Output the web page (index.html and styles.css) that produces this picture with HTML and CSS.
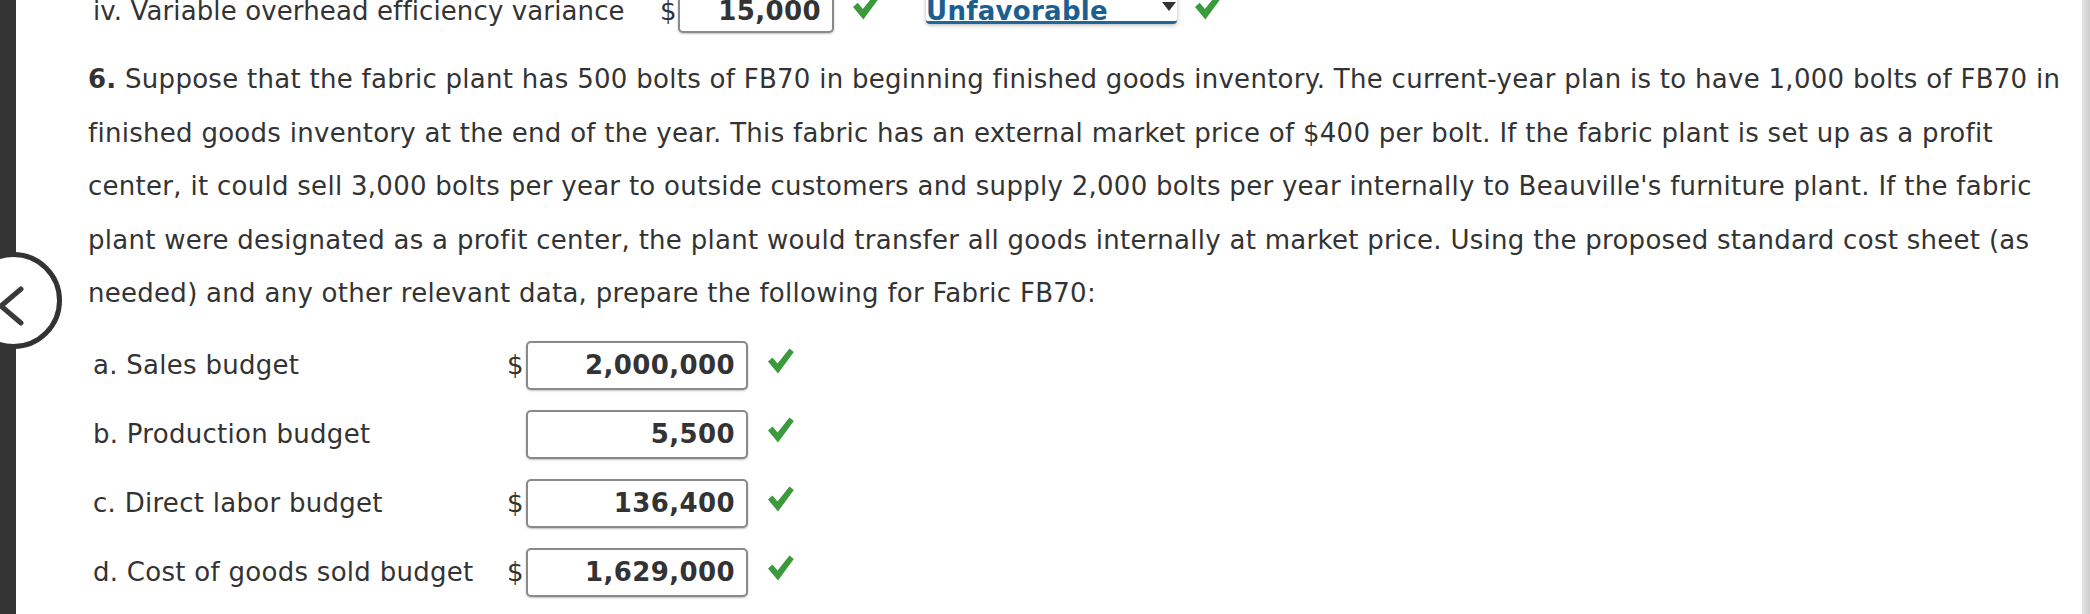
FILE: index.html
```html
<!DOCTYPE html>
<html lang="en">
<head>
<meta charset="utf-8">
<title>Fabric FB70 budgets</title>
<link rel="stylesheet" href="styles.css">
</head>
<body>
<div class="page">
  <div class="rail"></div>
  <div class="back">
    <svg class="chev" width="30" height="50" viewBox="0 0 30 50"><polyline points="21,6 1,23 21,40" fill="none" stroke="#3a3a3a" stroke-width="5" stroke-linecap="round" stroke-linejoin="round"/></svg>
  </div>
  <main class="content">
    <div class="toprow">
      <span class="lbl lbl-top">iv. Variable overhead efficiency variance</span>
      <span class="cur cur-top">$</span>
      <span class="box box-top">15,000</span>
      <svg class="check check-top" viewBox="0 0 26 26"><polygon points="0,13.5 4.5,9.5 9.5,15.5 21.5,0.5 25.8,4 10,25.5" fill="#3b9a3b"/></svg>
      <span class="select"><span class="sel-text">Unfavorable</span><svg class="arrow" viewBox="0 0 14 9"><polygon points="0,0 14,0 7,9" fill="#333"/></svg></span>
      <svg class="check check-sel" viewBox="0 0 26 26"><polygon points="0,13.5 4.5,9.5 9.5,15.5 21.5,0.5 25.8,4 10,25.5" fill="#3b9a3b"/></svg>
    </div>
    <p class="question"><b>6.</b> Suppose that the fabric plant has 500 bolts of FB70 in beginning finished goods inventory. The current-year plan is to have 1,000 bolts of FB70 in<br>finished goods inventory at the end of the year. This fabric has an external market price of $400 per bolt. If the fabric plant is set up as a profit<br>center, it could sell 3,000 bolts per year to outside customers and supply 2,000 bolts per year internally to Beauville's furniture plant. If the fabric<br>plant were designated as a profit center, the plant would transfer all goods internally at market price. Using the proposed standard cost sheet (as<br>needed) and any other relevant data, prepare the following for Fabric FB70:</p>
    <div class="rows">
      <span class="lbl">a. Sales budget</span>
      <span class="cur">$</span>
      <span class="box">2,000,000</span>
      <svg class="check" viewBox="0 0 26 26"><polygon points="0,13.5 4.5,9.5 9.5,15.5 21.5,0.5 25.8,4 10,25.5" fill="#3b9a3b"/></svg>

      <span class="lbl">b. Production budget</span>
      <span class="cur"></span>
      <span class="box">5,500</span>
      <svg class="check" viewBox="0 0 26 26"><polygon points="0,13.5 4.5,9.5 9.5,15.5 21.5,0.5 25.8,4 10,25.5" fill="#3b9a3b"/></svg>

      <span class="lbl">c. Direct labor budget</span>
      <span class="cur">$</span>
      <span class="box">136,400</span>
      <svg class="check" viewBox="0 0 26 26"><polygon points="0,13.5 4.5,9.5 9.5,15.5 21.5,0.5 25.8,4 10,25.5" fill="#3b9a3b"/></svg>

      <span class="lbl">d. Cost of goods sold budget</span>
      <span class="cur">$</span>
      <span class="box">1,629,000</span>
      <svg class="check" viewBox="0 0 26 26"><polygon points="0,13.5 4.5,9.5 9.5,15.5 21.5,0.5 25.8,4 10,25.5" fill="#3b9a3b"/></svg>
    </div>
  </main>
  <div class="scroll"></div>
</div>
</body>
</html>
```
FILE: styles.css
```css
html, body {
  margin: 0;
  padding: 0;
  background: #fff;
}
body {
  font-family: "DejaVu Sans", Verdana, sans-serif;
  font-size: 26px;
  letter-spacing: 0.28px;
  color: #333;
}
.page {
  position: relative;
  display: flex;
  width: 2090px;
  height: 614px;
  overflow: hidden;
}
.rail {
  width: 16px;
  flex: none;
  background: #333;
}
.back {
  position: absolute;
  left: -35px;
  top: 252px;
  width: 87px;
  height: 87px;
  border: 5px solid #333;
  border-radius: 50%;
  background: #fff;
}
.chev {
  position: absolute;
  left: 30px;
  top: 26px;
  filter: blur(0.6px);
}
.content {
  flex: 1;
  padding-left: 72px;
  min-width: 0;
}
.toprow {
  display: flex;
  align-items: baseline;
  height: 64px;
  margin-top: -11px;
  padding-left: 5px;
}
.lbl-top {
  width: 567px;
  flex: none;
  letter-spacing: 0.12px;
}
.cur {
  display: block;
}
.cur-top {
  width: 18px;
}
.box {
  box-sizing: border-box;
  display: block;
  height: 49px;
  line-height: 45px;
  border: 2px solid #8a8a8a;
  border-radius: 5px;
  box-shadow: 0 1px 2px rgba(0, 0, 0, 0.25);
  padding-right: 11px;
  text-align: right;
  font-weight: bold;
  letter-spacing: 0.4px;
  color: #333;
  background: #fff;
}
.box-top {
  width: 156px;
  height: 44px;
  line-height: 40px;
  flex: none;
}
.check {
  width: 26px;
  height: 26px;
  display: block;
  align-self: center;
}
.check-top {
  width: 27px;
  height: 27px;
  margin-left: 19px;
  align-self: baseline;
}
.select {
  display: flex;
  align-items: flex-end;
  justify-content: space-between;
  box-sizing: border-box;
  width: 251px;
  margin-left: 46px;
  line-height: 20px;
  padding-top: 10px;
  font-weight: bold;
  color: #1b5f92;
  border-bottom: 3px solid #1f6699;
  border-radius: 0 0 4px 4px;
  box-shadow: 0 1px 4px rgba(0, 0, 0, 0.3);
  background: #fff;
}
.arrow {
  width: 14px;
  height: 9px;
  margin-bottom: 10px;
  margin-right: 1px;
}
.check-sel {
  width: 27px;
  height: 27px;
  margin-left: 18px;
  align-self: baseline;
}
.question {
  margin: 0;
  line-height: 53.5px;
  white-space: nowrap;
}
.question b {
  font-weight: bold;
}
.rows {
  display: grid;
  grid-template-columns: 414px 19px 222px 26px;
  grid-auto-rows: 49px;
  row-gap: 20px;
  align-items: center;
  margin-top: 20px;
  padding-left: 5px;
}
.rows .check {
  margin-left: 20px;
  margin-top: -8px;
}
.rows .cur {
  line-height: 30px;
}
.scroll {
  width: 8px;
  flex: none;
  background: linear-gradient(to right, #e4e4e4, #cdcdcd);
}
```
